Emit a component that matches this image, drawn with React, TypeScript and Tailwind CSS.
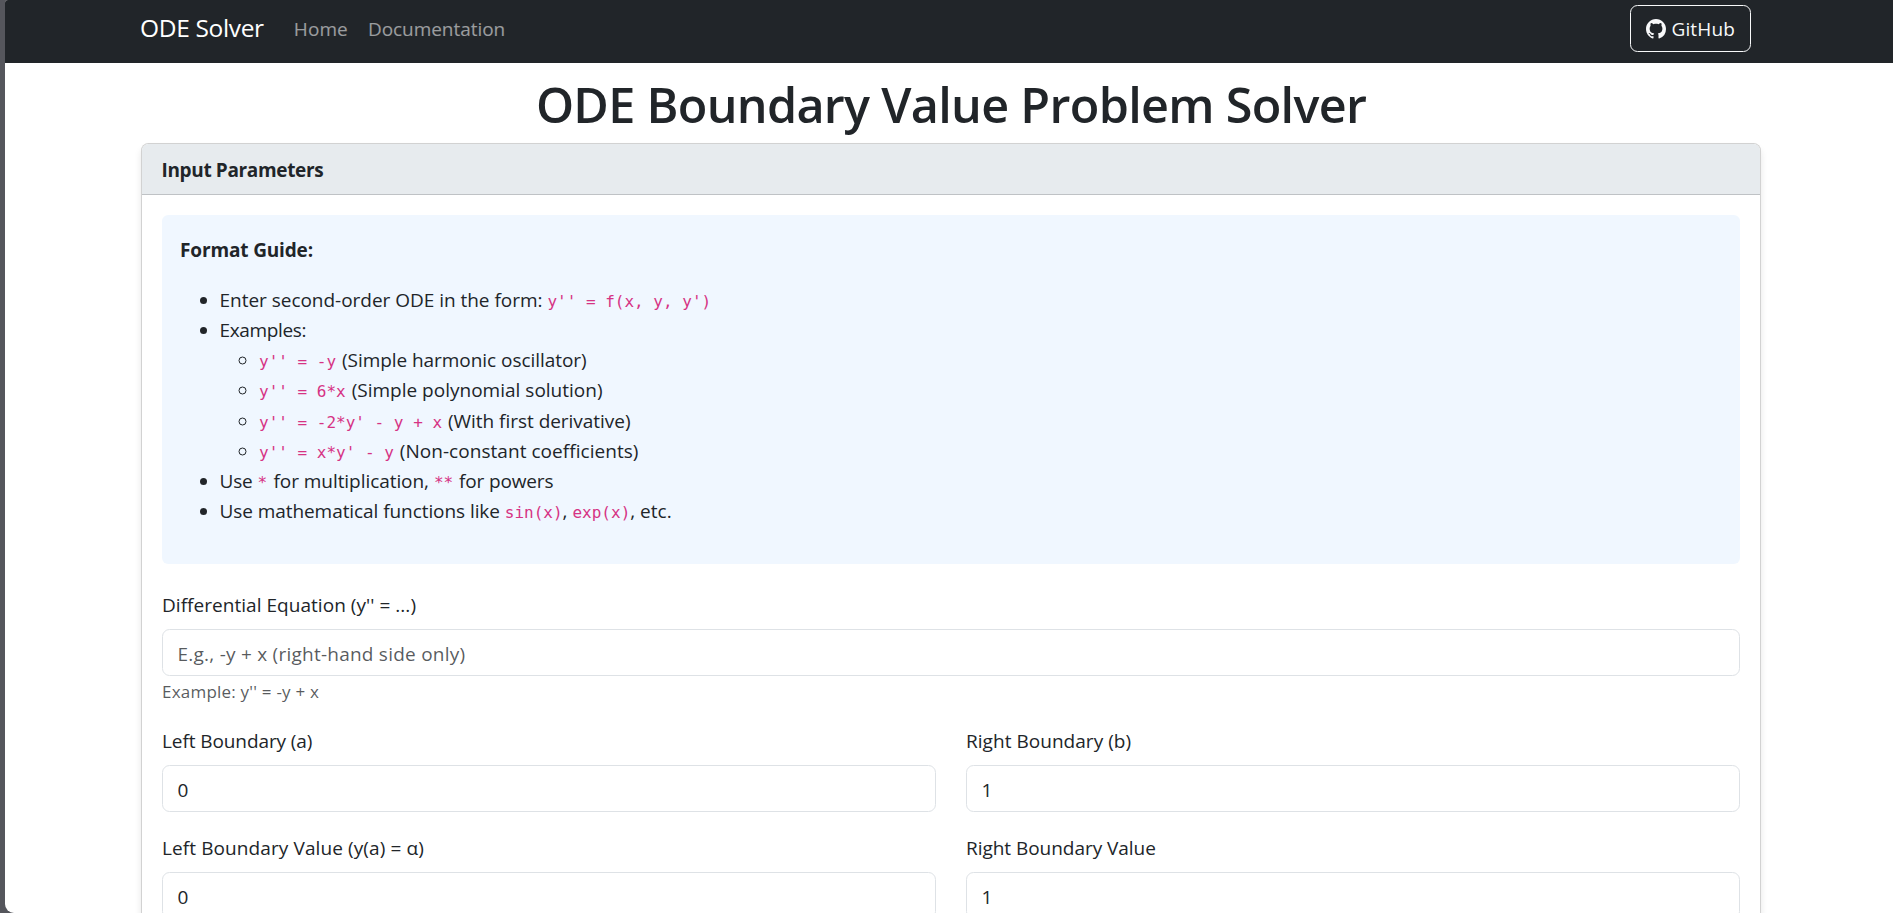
import React from 'react';
import { BsGithub } from 'react-icons/bs';

function Code({ children, className = '' }: { children: React.ReactNode; className?: string }) {
  return (
    <code className={`whitespace-pre font-['DejaVu_Sans_Mono',monospace] text-[16px] leading-[20px] tracking-normal text-[#d63384] ${className}`}>
      {children}
    </code>
  );
}

function Item({ children, className = '' }: { children: React.ReactNode; className?: string }) {
  return <li className={`pt-[2px] leading-[28px] whitespace-nowrap ${className}`}>{children}</li>;
}

function Example({ code, note, tracking, className = '' }: { code: string; note: string; tracking: string; className?: string }) {
  return (
    <Item className={className}>
      <Code>{code}</Code> <span className={`ml-px ${tracking}`}>{note}</span>
    </Item>
  );
}

function Field({ label, tracking, value, placeholder, inputTracking = '' }: {
  label: string;
  tracking: string;
  value?: string;
  placeholder?: string;
  inputTracking?: string;
}) {
  return (
    <label className="block">
      <span className={`block pt-[2px] leading-[28px] ${tracking}`}>{label}</span>
      <input
        type="text"
        defaultValue={value}
        placeholder={placeholder}
        className={`mt-[10px] block h-[47px] w-full rounded-[7.5px] border border-[#dee2e6] bg-white pt-[3px] pr-[15px] pl-[14.5px] text-[#212529] outline-none placeholder:text-[#212529]/75 ${inputTracking}`}
      />
    </label>
  );
}

export default function App() {
  return (
    <div className="h-[913px] overflow-hidden bg-[#55565c] pl-[5px] font-['Open_Sans',sans-serif] text-[19px] text-[#212529]">
      <div className="h-full overflow-hidden rounded-tl-[3px] rounded-bl-[9px] bg-white">
        <nav className="flex h-[63px] items-center bg-[#212529] pr-[142px] pb-[6px] pl-[136px]">
          <span className="pb-px -ml-px text-[24.5px] leading-[38px] tracking-[-0.34px] text-white">ODE Solver</span>
          <a className="ml-[30px] leading-[28px] tracking-[0.1px] text-white/55">Home</a>
          <a className="ml-[20px] leading-[28px] tracking-[-0.042px] text-white/55">Documentation</a>
          <a className="ml-auto flex h-[47px] w-[121px] items-center rounded-[7.5px] border border-[#f8f9fa] pl-[15px] text-[#f8f9fa]">
            <BsGithub size={20} />
            <span className="ml-[5.5px] leading-[28px] tracking-[0.131px]">GitHub</span>
          </a>
        </nav>

        <main className="ml-[136px] w-[1620px]">
          <h1 className="h-[80px] pt-[11px] text-center text-[48.5px] leading-[60px] font-semibold tracking-[-0.692px] whitespace-nowrap">
            ODE Boundary Value Problem Solver
          </h1>

          <section className="h-[900px] rounded-[7.5px] border border-black/[.175] bg-white shadow-[0_5px_7.5px_rgba(0,0,0,0.1)]">
            <header className="flex h-[51px] items-center rounded-t-[6.5px] border-b border-[#bfc2c5] bg-[#e7ebee] pl-[19.5px] font-bold tracking-[-0.351px]">
              <span className="pt-[2px] leading-[28px]">Input Parameters</span>
            </header>

            <div className="p-[20px]">
              <div className="h-[349px] rounded-[6.25px] bg-[#f0f7ff] px-[18px] py-[18.5px]">
                <div className="pt-[2px] leading-[28px] font-bold tracking-[-0.144px]">Format Guide:</div>
                <ul className="mt-[20px] list-disc pl-[39.5px]">
                  <Item>
                    <span className="tracking-[-0.025px]">Enter second-order ODE in the form:</span> <Code>{"y'' = f(x, y, y')"}</Code>
                  </Item>
                  <Item>
                    <span className="tracking-[-0.349px]">Examples:</span>
                    <ul className="list-[circle] pl-[39.5px]">
                      <Example code="y'' = -y" note="(Simple harmonic oscillator)" tracking="tracking-[-0.052px]" />
                      <Example code="y'' = 6*x" note="(Simple polynomial solution)" tracking="tracking-[0.006px]" />
                      <Example code="y'' = -2*y' - y + x" note="(With first derivative)" tracking="tracking-[-0.03px]" className="mt-px" />
                      <Example code="y'' = x*y' - y" note="(Non-constant coefficients)" tracking="tracking-[0.044px]" />
                    </ul>
                  </Item>
                  <Item>
                    <span className="tracking-[-0.2px]">Use</span> <Code>*</Code>{' '}
                    <span className="ml-[1.5px] tracking-[-0.06px]">for multiplication,</span> <Code>**</Code>{' '}
                    <span className="ml-[1px] tracking-[-0.15px]">for powers</span>
                  </Item>
                  <Item>
                    <span className="tracking-[-0.07px]">Use mathematical functions like</span> <Code>sin(x)</Code>, <Code>exp(x)</Code>, etc.
                  </Item>
                </ul>
              </div>

              <form className="mt-[25px]">
                <Field
                  label="Differential Equation (y'' = ...)"
                  tracking="tracking-[0.04px]"
                  placeholder="E.g., -y + x (right-hand side only)"
                  inputTracking="tracking-[0.239px]"
                />
                <div className="mt-[4px] mb-[21px] text-[17px] leading-[24px] tracking-[0.214px] text-[#212529]/75">
                  {"Example: y'' = -y + x"}
                </div>
                <div className="grid grid-cols-2 gap-x-[30px] gap-y-[20px]">
                  <Field label="Left Boundary (a)" tracking="tracking-[-0.09px]" value="0" />
                  <Field label="Right Boundary (b)" tracking="tracking-[0.04px]" value="1" />
                  <Field label="Left Boundary Value (y(a) = α)" tracking="tracking-[0.1px]" value="0" />
                  <Field label="Right Boundary Value" tracking="tracking-[-0.04px]" value="1" />
                </div>
              </form>
            </div>
          </section>
        </main>
      </div>
    </div>
  );
}
